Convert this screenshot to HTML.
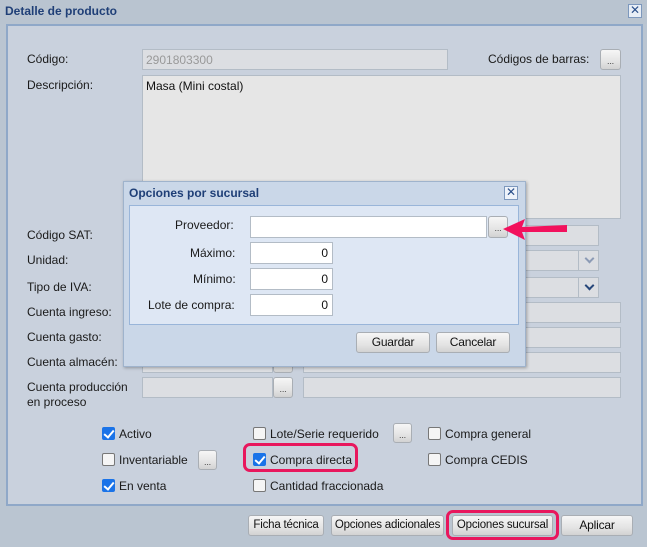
<!DOCTYPE html>
<html><head><meta charset="utf-8"><style>
*{box-sizing:border-box}
body{margin:0;width:647px;height:547px;background:#bac5d1;font-family:"Liberation Sans",sans-serif;font-size:12px;color:#111;position:relative;overflow:hidden}
.a{position:absolute}
.lbl{position:absolute;font-size:12px;color:#1a1a1a;white-space:nowrap}
.inp{position:absolute;background:#dcdee2;border:1px solid #b3bcc6}
.btn{position:absolute;border:1px solid #a9aeb4;border-radius:3px;background:linear-gradient(#f6f6f6,#e4e4e4 60%,#d2d2d2);font-size:12px;text-align:center;color:#111;white-space:nowrap;overflow:hidden;letter-spacing:-0.2px}
.dots{font-size:9px;line-height:14px;padding-top:4px;color:#444}
.cb{position:absolute;width:13px;height:13px;border:1px solid #777;border-radius:2px;background:#f5f5f5}
.cb.on{background:#1a73e8;border-color:#1a73e8}
.cb.on:after{content:"";position:absolute;left:3px;top:0px;width:4px;height:8px;border:solid #fff;border-width:0 2px 2px 0;transform:rotate(40deg)}
.chev{position:absolute;width:21px;height:21px;border-left:1px solid #b3bcc6}
.chev:after{content:"";position:absolute;left:7px;top:5px;width:5px;height:5px;border:solid currentColor;border-width:0 2px 2px 0;transform:rotate(45deg)}
</style></head><body>
<div class="a" style="left:0;top:0;width:647px;height:24px;background:#b9c4d0"></div>
<div class="a" style="left:5px;top:4px;font-weight:bold;color:#1f3f77;font-size:12px">Detalle de producto</div>
<div class="a" style="left:628px;top:4px;width:14px;height:14px;border:1px solid #7d98bd;background:#e8eef6;color:#2a4f8a;font-size:12px;line-height:11px;text-align:center">✕</div>
<div class="a" style="left:6px;top:24px;width:637px;height:482px;background:#c9d1dd;border:2px solid #8fa8c8"></div>

<div class="lbl" style="left:27px;top:52px">Código:</div>
<div class="inp" style="left:142px;top:49px;width:306px;height:21px;color:#999;padding:3px 3px">2901803300</div>
<div class="lbl" style="left:488px;top:52px">Códigos de barras:</div>
<div class="btn dots" style="left:600px;top:49px;width:21px;height:21px">...</div>
<div class="lbl" style="left:27px;top:78px">Descripción:</div>
<div class="inp" style="left:142px;top:75px;width:479px;height:144px;background:#e6e6e6;padding:3px 3px">Masa (Mini costal)</div>

<div class="lbl" style="left:27px;top:228px">Código SAT:</div>
<div class="inp" style="left:142px;top:225px;width:457px;height:21px"></div>
<div class="lbl" style="left:27px;top:253px">Unidad:</div>
<div class="inp" style="left:142px;top:250px;width:457px;height:21px"></div>
<div class="chev" style="left:578px;top:250px;color:#8c9bb5"></div>
<div class="lbl" style="left:27px;top:280px">Tipo de IVA:</div>
<div class="inp" style="left:142px;top:277px;width:457px;height:21px"></div>
<div class="chev" style="left:578px;top:277px;color:#27477a"></div>
<div class="lbl" style="left:27px;top:305px">Cuenta ingreso:</div>
<div class="inp" style="left:303px;top:302px;width:318px;height:21px"></div>
<div class="lbl" style="left:27px;top:330px">Cuenta gasto:</div>
<div class="inp" style="left:303px;top:327px;width:318px;height:21px"></div>
<div class="lbl" style="left:27px;top:355px">Cuenta almacén:</div>
<div class="inp" style="left:142px;top:352px;width:131px;height:21px"></div>
<div class="btn dots" style="left:273px;top:352px;width:20px;height:21px">...</div>
<div class="inp" style="left:303px;top:352px;width:318px;height:21px"></div>
<div class="lbl" style="left:27px;top:380px;line-height:15px">Cuenta producción<br>en proceso</div>
<div class="inp" style="left:142px;top:377px;width:131px;height:21px"></div>
<div class="btn dots" style="left:273px;top:377px;width:20px;height:21px">...</div>
<div class="inp" style="left:303px;top:377px;width:318px;height:21px"></div>

<div class="cb on" style="left:102px;top:427px"></div><div class="lbl" style="left:119px;top:427px">Activo</div>
<div class="cb" style="left:102px;top:453px"></div><div class="lbl" style="left:119px;top:453px">Inventariable</div>
<div class="btn dots" style="left:198px;top:450px;width:19px;height:20px">...</div>
<div class="cb on" style="left:102px;top:479px"></div><div class="lbl" style="left:119px;top:479px">En venta</div>
<div class="cb" style="left:253px;top:427px"></div><div class="lbl" style="left:270px;top:427px">Lote/Serie requerido</div>
<div class="btn dots" style="left:393px;top:423px;width:19px;height:20px">...</div>
<div class="cb on" style="left:253px;top:453px"></div><div class="lbl" style="left:270px;top:453px">Compra directa</div>
<div class="a" style="left:243px;top:443px;width:115px;height:29px;border:3px solid #e8175d;border-radius:7px"></div>
<div class="cb" style="left:253px;top:479px"></div><div class="lbl" style="left:270px;top:479px">Cantidad fraccionada</div>
<div class="cb" style="left:428px;top:427px"></div><div class="lbl" style="left:445px;top:427px">Compra general</div>
<div class="cb" style="left:428px;top:453px"></div><div class="lbl" style="left:445px;top:453px">Compra CEDIS</div>

<div class="btn" style="left:248px;top:515px;width:76px;height:21px;line-height:19px;font-size:11.5px">Ficha técnica</div>
<div class="btn" style="left:331px;top:515px;width:113px;height:21px;line-height:19px;font-size:11.5px">Opciones adicionales</div>
<div class="btn" style="left:452px;top:515px;width:101px;height:21px;line-height:19px;font-size:11.5px">Opciones sucursal</div>
<div class="a" style="left:446px;top:510px;width:113px;height:30px;border:3px solid #e8175d;border-radius:7px"></div>
<div class="btn" style="left:561px;top:515px;width:72px;height:21px;line-height:19px">Aplicar</div>

<div class="a" style="left:123px;top:181px;width:403px;height:186px;background:#cad7e8;border:1px solid #9fb3cc;box-shadow:1px 1px 3px rgba(0,0,0,.3)"></div>
<div class="a" style="left:129px;top:186px;font-weight:bold;color:#1f3f77">Opciones por sucursal</div>
<div class="a" style="left:504px;top:186px;width:14px;height:14px;border:1px solid #7d98bd;background:#eef3fa;color:#2a4f8a;font-size:12px;line-height:11px;text-align:center">✕</div>
<div class="a" style="left:129px;top:205px;width:390px;height:120px;background:#dee7f4;border:1px solid #99b5d9"></div>
<div class="lbl" style="left:175px;top:218px">Proveedor:</div>
<div class="inp" style="left:250px;top:216px;width:237px;height:22px;background:#fff"></div>
<div class="btn dots" style="left:488px;top:216px;width:20px;height:22px">...</div>
<div class="lbl" style="left:190px;top:246px">Máximo:</div>
<div class="inp" style="left:250px;top:242px;width:83px;height:22px;background:#fff;text-align:right;padding:3px 4px">0</div>
<div class="lbl" style="left:193px;top:272px">Mínimo:</div>
<div class="inp" style="left:250px;top:268px;width:83px;height:22px;background:#fff;text-align:right;padding:3px 4px">0</div>
<div class="lbl" style="left:148px;top:298px">Lote de compra:</div>
<div class="inp" style="left:250px;top:294px;width:83px;height:22px;background:#fff;text-align:right;padding:3px 4px">0</div>
<div class="btn" style="left:356px;top:332px;width:74px;height:21px;line-height:19px">Guardar</div>
<div class="btn" style="left:436px;top:332px;width:74px;height:21px;line-height:19px">Cancelar</div>

<svg class="a" style="left:495px;top:215px" width="80" height="30"><path d="M8 14 L30 4 L27 12 L72 10 L72 17 L27 17 L30 25 Z" fill="#f2115d"/></svg>
</body></html>
